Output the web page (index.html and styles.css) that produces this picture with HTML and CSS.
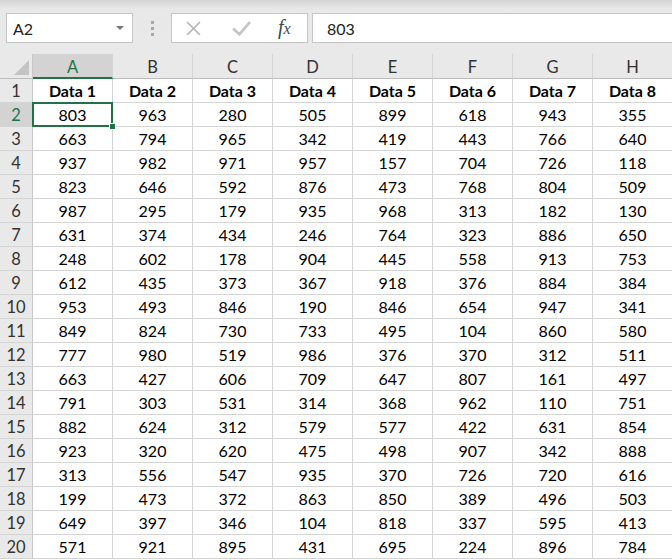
FILE: index.html
```html
<!DOCTYPE html>
<html lang="en">
<head>
    <meta charset="UTF-8">
    <meta name="viewport" content="width=device-width, initial-scale=1.0">
    <title>Sheet</title>
    <link rel="stylesheet" href="styles.css">
</head>
<body>
    <div class="toolbar">
        <div class="name-box">
            <span>A2</span>
            <span class="caret"></span>
        </div>
        <div class="grip">
            <span></span><span></span><span></span>
        </div>
        <div class="fx-buttons">
            <svg class="tool x" viewBox="0 0 16 16" fill="none" stroke="#b8b8b8" stroke-width="1.5"><line x1="2" y1="2" x2="14" y2="14"></line><line x1="14" y1="2" x2="2" y2="14"></line></svg>
            <svg class="tool check" viewBox="0 0 20 16" fill="none" stroke="#c4c4c4" stroke-width="2.6"><polyline points="2,8 8,13.5 18,2"></polyline></svg>
            <span class="fx">f<i>x</i></span>
        </div>
        <div class="formula">803</div>
    </div>
    <div class="sheet" id="sheet">
        <div class="corner"><span class="tri"></span></div>
    </div>
    <script>
        const data = [
            [803, 963, 280, 505, 899, 618, 943, 355],
            [663, 794, 965, 342, 419, 443, 766, 640],
            [937, 982, 971, 957, 157, 704, 726, 118],
            [823, 646, 592, 876, 473, 768, 804, 509],
            [987, 295, 179, 935, 968, 313, 182, 130],
            [631, 374, 434, 246, 764, 323, 886, 650],
            [248, 602, 178, 904, 445, 558, 913, 753],
            [612, 435, 373, 367, 918, 376, 884, 384],
            [953, 493, 846, 190, 846, 654, 947, 341],
            [849, 824, 730, 733, 495, 104, 860, 580],
            [777, 980, 519, 986, 376, 370, 312, 511],
            [663, 427, 606, 709, 647, 807, 161, 497],
            [791, 303, 531, 314, 368, 962, 110, 751],
            [882, 624, 312, 579, 577, 422, 631, 854],
            [923, 320, 620, 475, 498, 907, 342, 888],
            [313, 556, 547, 935, 370, 726, 720, 616],
            [199, 473, 372, 863, 850, 389, 496, 503],
            [649, 397, 346, 104, 818, 337, 595, 413],
            [571, 921, 895, 431, 695, 224, 896, 784]
        ];
        const sheet = document.getElementById('sheet');
        const letters = 'ABCDEFGH';

        function addCell(cls, text) {
            let el = document.createElement('div');
            el.className = cls;
            el.textContent = text;
            sheet.appendChild(el);
            return el;
        }

        for (let i = 0; i < letters.length; i++) {
            addCell(i === 0 ? 'col-head active' : 'col-head', letters[i]);
        }
        addCell('row-head', '1');
        for (let i = 0; i < 8; i++) {
            addCell('cell bold', 'Data ' + (i + 1));
        }
        data.forEach(function (row, r) {
            addCell(r === 0 ? 'row-head active' : 'row-head', r + 2);
            row.forEach(function (val, c) {
                let el = addCell('cell', val);
                if (r === 0 && c === 0) {
                    el.classList.add('selected');
                }
            });
        });
    </script>
</body>
</html>
```

FILE: styles.css
```css
body {
    margin: 0;
    width: 672px;
    height: 560px;
    overflow: hidden;
    background: #fff;
    font-family: Lato, "Open Sans", sans-serif;
}
.toolbar {
    height: 54px;
    box-sizing: border-box;
    padding: 13px 0 0 6px;
    display: flex;
    align-items: flex-start;
    background: linear-gradient(#d4d4d4 0px, #e8e8e8 9px, #e9e9e9 100%);
}
.name-box {
    width: 127px;
    height: 30px;
    box-sizing: border-box;
    border: 1px solid #c6c6c6;
    background: #fff;
    display: flex;
    align-items: center;
    justify-content: space-between;
    padding: 0 8px 0 6px;
    font-size: 16px;
    color: #222;
}
.caret {
    width: 0;
    height: 0;
    border-left: 4px solid transparent;
    border-right: 4px solid transparent;
    border-top: 4px solid #777;
}
.grip {
    width: 38px;
    height: 30px;
    display: flex;
    flex-direction: column;
    justify-content: center;
    align-items: center;
    gap: 3px;
}
.grip span {
    width: 3px;
    height: 3px;
    background: #a8a8a8;
}
.fx-buttons {
    width: 137px;
    height: 30px;
    box-sizing: border-box;
    border: 1px solid #c6c6c6;
    background: #fff;
    display: flex;
    align-items: center;
    padding-left: 13px;
}
.tool.x {
    width: 17px;
    height: 17px;
}
.tool.check {
    width: 21px;
    height: 17px;
    margin-left: 29px;
}
.fx {
    font-family: "Liberation Serif", serif;
    font-style: italic;
    font-size: 20px;
    color: #3e4a4a;
    margin-left: 26px;
    margin-top: -2px;
}
.fx i {
    font-size: 16px;
}
.formula {
    flex: 1;
    height: 30px;
    box-sizing: border-box;
    margin-left: 4px;
    border: 1px solid #c6c6c6;
    border-right: none;
    background: #fff;
    display: flex;
    align-items: center;
    padding-left: 14px;
    font-size: 16px;
    color: #222;
}
.sheet {
    display: grid;
    grid-template-columns: 33px repeat(8, 80px);
    grid-template-rows: 25px;
    grid-auto-rows: 24px;
    background: #fff;
}
.corner, .col-head, .row-head {
    background: #e9e9e9;
    color: #333;
    box-sizing: border-box;
    display: flex;
    align-items: center;
    justify-content: center;
    font-size: 16.5px;
}
.corner {
    border-right: 1px solid #c8c8c8;
    border-bottom: 1px solid #bcbcbc;
    position: relative;
}
.tri {
    position: absolute;
    right: 3px;
    bottom: 3px;
    width: 0;
    height: 0;
    border-left: 15px solid transparent;
    border-bottom: 15px solid #c4c4c4;
}
.col-head {
    border-right: 1px solid #d4d4d4;
    border-bottom: 1px solid #bcbcbc;
    padding-top: 2px;
}
.col-head.active {
    background: #d3d3d3;
    color: #217346;
    border-bottom: 2px solid #217346;
}
.row-head {
    border-right: 1px solid #c8c8c8;
    border-bottom: 1px solid #d4d4d4;
}
.row-head.active {
    background: #d3d3d3;
    color: #217346;
}
.cell {
    border-right: 1px solid #d4d4d4;
    border-bottom: 1px solid #d4d4d4;
    box-sizing: border-box;
    display: flex;
    align-items: center;
    justify-content: center;
    font-size: 16px;
    color: #000;
}
.cell.bold {
    font-weight: bold;
}
.cell.selected {
    position: relative;
}
.cell.selected::before {
    content: "";
    position: absolute;
    left: -1px;
    top: -1px;
    right: -1px;
    bottom: -1px;
    border: 2px solid #217346;
}
.cell.selected::after {
    content: "";
    position: absolute;
    right: -4px;
    bottom: -4px;
    width: 5px;
    height: 5px;
    background: #217346;
    border: 1px solid #fff;
}
```
